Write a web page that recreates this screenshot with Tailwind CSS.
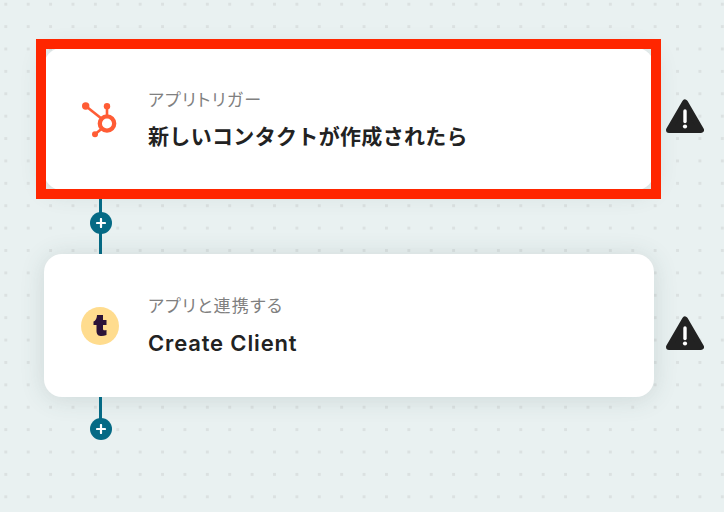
<!DOCTYPE html>
<html lang="ja"><head><meta charset="utf-8">
<script src="https://cdn.jsdelivr.net/npm/@tailwindcss/browser@4"></script>
</head>
<body class="m-0">
<div class="relative w-[724px] h-[512px] overflow-hidden bg-[#e9f1f1] bg-[radial-gradient(circle,#dbe1e1_1.5px,transparent_1.7px)] bg-[size:22.4px_22.4px] bg-[position:-5.4px_-7px] font-['Inter','Noto_Sans_CJK_JP',sans-serif] pl-[44px] pt-[48px]">
  <div class="w-[610px] flex flex-col">
    <div class="relative h-[142px] rounded-[18px] bg-white flex items-center pl-[36px] shadow-[0_2px_24px_rgba(60,90,90,0.16)]">
      <svg class="w-[40px] h-[40px] shrink-0" viewBox="0 0 40 40" fill="none">
        <circle cx="27" cy="24.500" r="7.200" stroke="#ff5c35" stroke-width="4.300"/>
        <path d="M5.700 7 L22 20" stroke="#ff5c35" stroke-width="2.600"/>
        <path d="M27 7.300 V18" stroke="#ff5c35" stroke-width="2.600"/>
        <path d="M15 35.300 L22 29.500" stroke="#ff5c35" stroke-width="2.600"/>
        <circle cx="5.700" cy="7" r="3.700" fill="#ff5c35"/>
        <circle cx="27" cy="7.300" r="3.200" fill="#ff5c35"/>
        <circle cx="15" cy="35.300" r="3" fill="#ff5c35"/>
      </svg>
      <div class="ml-[28px] flex flex-col -mt-[1px]">
        <span class="text-[17px] leading-[24px] tracking-[1.3px] [font-feature-settings:'palt'] text-[#808080]">アプリトリガー</span>
        <span class="mt-[12px] text-[21px] leading-[26px] font-semibold tracking-[0.33px] text-[#222]">新しいコンタクトが作成されたら</span>
      </div>
      <svg class="absolute left-[622px] top-[51px] w-[38px] h-[36px]" viewBox="0 0 38 36">
        <path d="M19 3.500 L35 31 H3 Z" fill="#222" stroke="#222" stroke-width="6" stroke-linejoin="round"/>
        <path d="M19 12 V22.500" stroke="#fff" stroke-width="3.400" stroke-linecap="round"/>
        <circle cx="19" cy="27.500" r="2.100" fill="#fff"/>
      </svg>
    </div>
    <div class="relative ml-[55px] w-[3px] h-[64px] bg-[#056a85]">
      <div class="absolute left-[-9px] top-[22px] w-[22px] h-[22px] rounded-full bg-[#056a85] flex items-center justify-center">
        <svg class="w-[10px] h-[10px]" viewBox="0 0 10 10"><path d="M5 1 V9 M1 5 H9" stroke="#fff" stroke-width="2.200" stroke-linecap="round"/></svg>
      </div>
    </div>
    <div class="relative h-[143px] rounded-[18px] bg-white flex items-center pl-[37px] shadow-[0_2px_24px_rgba(60,90,90,0.16)]">
      <div class="w-[38px] h-[38px] rounded-full bg-[#ffdc8e] shrink-0 flex items-center justify-center">
        <svg class="w-[18px] h-[24px]" viewBox="0 0 18 24"><path d="M6 1 H12 V6 H15.500 V11 H12 V15 C12 16.500 13.500 16.500 15.500 16 V21 C10.500 23 5.500 22.500 5.500 17 V11 H2.500 V7.500 C4.500 7 6 4 6 1 Z" fill="#2c1338"/></svg>
      </div>
      <div class="ml-[29px] flex flex-col -mt-[1px]">
        <span class="text-[17px] leading-[24px] tracking-[1.3px] [font-feature-settings:'palt'] text-[#808080]">アプリと連携する</span>
        <span class="mt-[12px] text-[22px] leading-[26px] font-semibold tracking-[0.85px] text-[#222]">Create Client</span>
      </div>
      <svg class="absolute left-[622px] top-[62px] w-[38px] h-[36px]" viewBox="0 0 38 36">
        <path d="M19 3.500 L35 31 H3 Z" fill="#222" stroke="#222" stroke-width="6" stroke-linejoin="round"/>
        <path d="M19 12 V22.500" stroke="#fff" stroke-width="3.400" stroke-linecap="round"/>
        <circle cx="19" cy="27.500" r="2.100" fill="#fff"/>
      </svg>
    </div>
    <div class="relative ml-[55px] w-[3px] h-[24px] bg-[#056a85]">
      <div class="absolute left-[-9px] top-[21px] w-[22px] h-[22px] rounded-full bg-[#056a85] flex items-center justify-center">
        <svg class="w-[10px] h-[10px]" viewBox="0 0 10 10"><path d="M5 1 V9 M1 5 H9" stroke="#fff" stroke-width="2.200" stroke-linecap="round"/></svg>
      </div>
    </div>
  </div>
  <div class="absolute left-[36px] top-[39px] w-[625px] h-[160px] border-[10px] border-[#ff2600]"></div>
</div>
</body></html>
